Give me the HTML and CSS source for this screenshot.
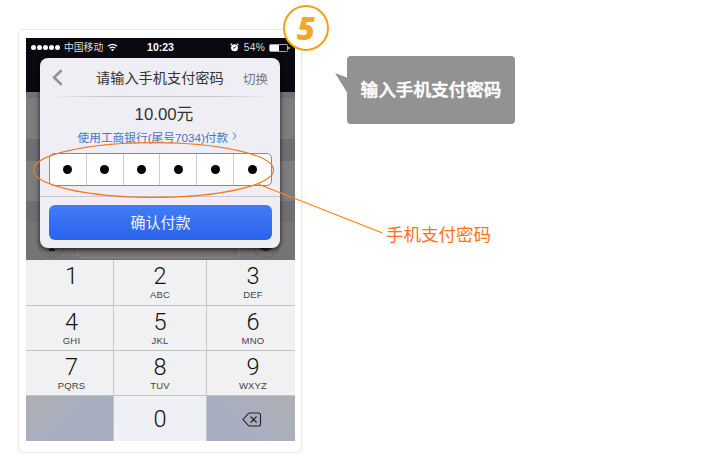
FILE: index.html
```html
<!DOCTYPE html>
<html lang="zh-CN">
<head>
<meta charset="utf-8">
<title>手机支付密码</title>
<link rel="stylesheet" href="styles.css">
</head>
<body>
<main class="step">
  <section class="frame">
    <div class="phone">
      <header class="status">
        <div class="carrier"><i class="signal"></i><i class="signal"></i><i class="signal"></i><i class="signal"></i><i class="signal"></i><span>中国移动</span>
          <svg class="wifi" width="11" height="9" viewBox="0 0 12 9"><path d="M1 3.2Q6 -1 11 3.2M3 5.3Q6 2.9 9 5.3" fill="none" stroke="#fff" stroke-width="1.3"/><path d="M4.2 6.7Q6 5.5 7.8 6.7L6 8.7Z" fill="#fff"/></svg>
        </div>
        <b class="clock">10:23</b>
        <div class="power">
          <svg width="9" height="9" viewBox="0 0 9 9"><circle cx="4.5" cy="4.800" r="3.500" fill="#fff"/><path d="M.6 2.100 2 .7M8.400 2.100 7 .7" stroke="#fff" stroke-width="1.200"/><path d="M6 3.200 4.500 5H3" fill="none" stroke="#111" stroke-width=".9"/></svg>
          <span>54%</span>
          <svg width="21" height="8" viewBox="0 0 21 8"><rect x=".5" y=".5" width="18" height="7" rx="1" fill="none" stroke="#aaa"/><path d="M1 1h9v6H1z" fill="#fff"/><path d="M20 3v2" stroke="#fff" stroke-width="1.200"/></svg>
        </div>
      </header>
      <div class="chat">
        <div class="toolbar">
          <span class="round"><svg width="10" height="12" viewBox="0 0 10 12"><path d="M5 0v9M2 10h6" stroke="#222" stroke-width="2"/></svg></span>
          <span class="field"></span>
          <span class="round"><i class="smile"></i></span>
        </div>
      </div>
      <div class="keypad">
        <div class="key">1</div><div class="key">2<small>ABC</small></div><div class="key">3<small>DEF</small></div>
        <div class="key">4<small>GHI</small></div><div class="key">5<small>JKL</small></div><div class="key">6<small>MNO</small></div>
        <div class="key">7<small>PQRS</small></div><div class="key">8<small>TUV</small></div><div class="key">9<small>WXYZ</small></div>
        <div class="key blank"></div><div class="key zero">0</div>
        <div class="key delete"><svg width="20" height="15" viewBox="0 0 20 15"><path d="M1 7.500 6.300 1.700Q7 1 8 1h8.500Q18.500 1 18.500 3v9q0 2-2 2H8q-1 0-1.700-.7ZM8.600 4.500l6 6M14.600 4.500l-6 6" fill="none" stroke="#222" stroke-width="1.100"/></svg></div>
      </div>
      <div class="dialog">
        <div class="title">
          <svg width="11" height="17" viewBox="0 0 11 17"><path d="M9.600 1.200 2 8.500l7.600 7.300" fill="none" stroke="#929297" stroke-width="2.600"/></svg>
          <h1>请输入手机支付密码</h1>
          <span class="switch">切换</span>
        </div>
        <div class="amount">10.00元</div>
        <div class="bank"><span>使用工商银行(尾号7034)付款</span><svg width="5" height="8" viewBox="0 0 5 8"><path d="m1 .5 3 3.500-3 3.500" fill="none" stroke="#4676bd"/></svg></div>
        <div class="pin"><i></i><i></i><i></i><i></i><i></i><i></i></div>
        <div class="actions"><div class="confirm">确认付款</div></div>
      </div>
    </div>
  </section>
  <aside class="notes">
    <div class="bubble"><svg class="tail" width="13" height="21" viewBox="0 0 13 21"><path d="M0 0 13 5v16Z" fill="#929292"/></svg>输入手机支付密码</div>
    <div class="label">手机支付密码</div>
  </aside>
  <svg class="marks" width="728" height="463" viewBox="0 0 728 463">
    <ellipse cx="153.500" cy="170" rx="120" ry="27.300" fill="none" stroke="#f47920" stroke-width="1.200"/>
    <path d="M258 184 382.500 233" stroke="#fb850d" stroke-width="1.200"/>
  </svg>
  <div class="badge">5</div>
</main>
</body>
</html>
```
FILE: styles.css
```css
* { box-sizing: border-box; }
body {
  margin: 0;
  background: #fff;
  font-family: "Liberation Sans", "Noto Sans CJK SC", sans-serif;
}
.step {
  position: relative;
  display: flex;
  width: 728px;
  height: 463px;
  padding: 29px 0 0 18px;
  overflow: hidden;
}
.frame {
  width: 284px;
  height: 424px;
  padding: 8px 7px;
  border: 1px solid #e6e6e6;
  border-radius: 5px;
}
.phone {
  position: relative;
  display: flex;
  flex-direction: column;
  width: 269px;
  height: 403px;
  overflow: hidden;
}
.status {
  display: grid;
  grid-template-columns: 1fr auto 1fr;
  align-items: start;
  height: 54px;
  padding: 4px 5px 0;
  background: #080a10;
  color: #fff;
  font-size: 10.5px;
  line-height: 11px;
}
.carrier, .power { display: flex; align-items: center; height: 11px; }
.carrier span { margin: 0 4px 0 3px; font-size: 9.800px; white-space: nowrap; color: #ddd; }
.signal { flex: none; width: 5px; height: 5px; margin-right: 1px; border-radius: 50%; background: #fff; }
.clock { font-size: 10.5px; }
.power { justify-content: flex-end; gap: 4px; }
.power svg:first-child { margin-right: 1px; }
.power span { font-size: 10.200px; letter-spacing: .3px; color: #ddd; }
.chat {
  display: flex;
  align-items: flex-end;
  height: 168px;
  background: linear-gradient(#717176 0 6px, #7d7d7d 6px 47px, #6e6e73 47px 69px, #7d7d7d 69px 109px, #6e6e73 109px 130px, #757575 130px);
}
.toolbar { display: flex; align-items: flex-end; gap: 12px; width: 100%; height: 30px; padding: 0 12px 2px; }
.round {
  display: flex;
  align-items: center;
  justify-content: center;
  width: 27px;
  height: 27px;
  border: 1px solid #666;
  border-radius: 50%;
}
.round svg { margin-top: 3px; }
.field { width: 163px; height: 27px; border: 1px solid #888; border-radius: 6px; background: #747474; }
.smile { width: 17px; height: 17px; margin-top: -4px; border-radius: 50%; background: #222; }
.keypad {
  display: grid;
  grid-template-columns: 88px 93px 88px;
  grid-template-rows: 46px 45px 45px 45px;
  height: 181px;
  background: #f1f1f3;
}
.key {
  display: flex;
  flex-direction: column;
  align-items: center;
  padding-top: 3px;
  border-right: 1px solid #c7c8cc;
  border-bottom: 1px solid #c3c4c8;
  color: #111;
  font: 300 23.500px/27px Roboto, sans-serif;
}
.key:nth-child(3n) { border-right: 0; padding-left: 4px; }
.key:nth-child(3n + 1) { padding-left: 4px; }
.key:nth-child(n + 10) { border-bottom: 0; }
.key small { font: 9.500px/10px "Liberation Sans", sans-serif; color: #444; letter-spacing: .2px; }
.blank { background: linear-gradient(135deg, #adafb3, #a9afbf 45%, #a5acbf); }
.key.zero { padding-top: 10px; background: #eef0f6; }
.key.delete { justify-content: center; padding: 2px 0 0 1px; background: linear-gradient(45deg, #a5acbf, #a9afbf 45%, #adafb3); }
.dialog {
  position: absolute;
  top: 20px;
  left: 14px;
  display: flex;
  flex-direction: column;
  width: 240px;
  height: 190px;
  border-radius: 8px;
  background: #efeef4;
  box-shadow: 0 2px 5px rgba(0, 0, 0, .75);
}
.title {
  display: flex;
  align-items: center;
  flex: none;
  height: 39px;
  padding: 0 12px;
  border-bottom: 1px solid;
  border-image: linear-gradient(90deg, transparent 5%, #c9c9cd 25% 75%, transparent 96%) 1;
}
h1 { margin: 1px 0 0 33px; color: #333; font-size: 14.2px; font-weight: 400; line-height: 20px; white-space: nowrap; }
.switch { margin: 2px 0 0 auto; color: #76767a; font-size: 12.5px; }
.amount { height: 32px; padding-left: 8px; color: #333; font-size: 16.800px; line-height: 35px; text-align: center; }
.bank { display: flex; align-items: center; height: 16px; margin-top: -1px; padding-left: 37.500px; color: #4676bd; font-size: 11.700px; white-space: nowrap; }
.bank svg { margin-left: 4px; }
.pin {
  display: grid;
  grid-template-columns: repeat(6, 1fr);
  width: 223px;
  height: 33px;
  margin: 9px 0 0 9px;
  border: 1px solid #898a8d;
  border-radius: 5px;
  background: #fff;
}
.pin i { display: flex; align-items: center; justify-content: center; border-right: 1px solid #ccc; }
.pin i:last-child { border: 0; }
.pin i::before { content: ""; width: 9px; height: 9px; border-radius: 50%; background: #000; }
.actions { height: 52px; margin-top: 10px; padding: 8px 8px 0 9px; border-top: 1px solid #c8c8cd; }
.confirm {
  height: 35px;
  border-radius: 6px;
  background: linear-gradient(#417cf6, #2a63ea);
  color: #f2f5ff;
  font-size: 15px;
  line-height: 35px;
  text-align: center;
}
.notes { padding: 27px 0 0 45px; }
.bubble {
  position: relative;
  width: 168px;
  height: 68px;
  border-radius: 4px;
  background: #929292;
  color: #fff;
  font: 500 17.600px/66px "Noto Sans CJK SC", sans-serif;
  text-align: center;
  white-space: nowrap;
  -webkit-text-stroke: .5px #fff;
}
.tail { position: absolute; left: -12px; top: 17px; }
.label { margin: 97px 0 0 39px; color: #ff7416; font: 17.500px/26px "Noto Sans CJK SC", sans-serif; white-space: nowrap; }
.marks { position: absolute; inset: 0; }
.badge {
  position: absolute;
  top: 5px;
  left: 283px;
  width: 46px;
  height: 46px;
  border: 2px solid #f6a010;
  border-radius: 50%;
  background: #fff;
  color: #f2a72c;
  font: italic 800 31px/43px "Open Sans", sans-serif;
  text-align: center;
}
```
